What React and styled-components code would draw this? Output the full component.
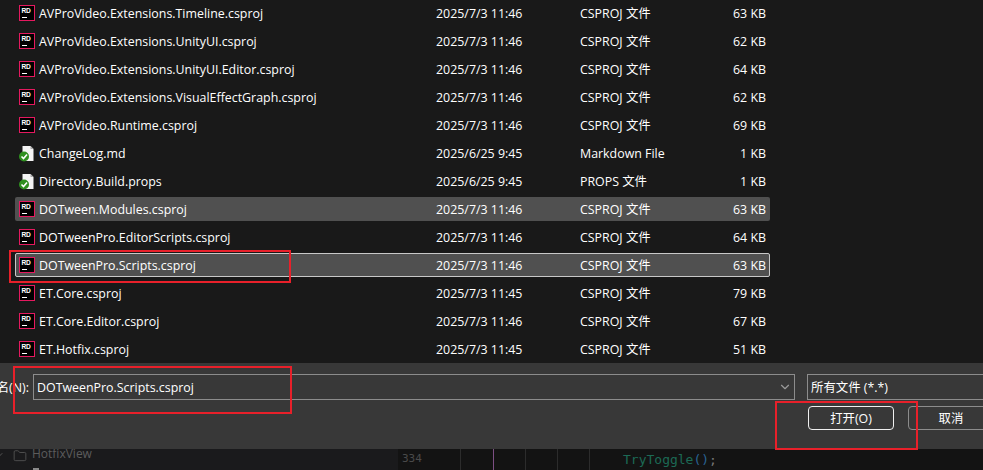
import React from 'react'
import styled, { createGlobalStyle } from 'styled-components'
import { ChevronDown, Folder } from 'lucide-react'

const GlobalStyle = createGlobalStyle`
  html, body {
    margin: 0;
    padding: 0;
    background: #191919;
  }
  body {
    font-family: "Open Sans", "Noto Sans CJK SC", sans-serif;
    font-size: 12.4px;
    color: #fff;
  }
`

const files = [
  { name: 'AVProVideo.Extensions.Timeline.csproj', date: '2025/7/3 11:46', type: 'CSPROJ 文件', size: '63 KB', icon: 'rd' },
  { name: 'AVProVideo.Extensions.UnityUI.csproj', date: '2025/7/3 11:46', type: 'CSPROJ 文件', size: '62 KB', icon: 'rd' },
  { name: 'AVProVideo.Extensions.UnityUI.Editor.csproj', date: '2025/7/3 11:46', type: 'CSPROJ 文件', size: '64 KB', icon: 'rd' },
  { name: 'AVProVideo.Extensions.VisualEffectGraph.csproj', date: '2025/7/3 11:46', type: 'CSPROJ 文件', size: '62 KB', icon: 'rd' },
  { name: 'AVProVideo.Runtime.csproj', date: '2025/7/3 11:46', type: 'CSPROJ 文件', size: '69 KB', icon: 'rd' },
  { name: 'ChangeLog.md', date: '2025/6/25 9:45', type: 'Markdown File', size: '1 KB', icon: 'doc' },
  { name: 'Directory.Build.props', date: '2025/6/25 9:45', type: 'PROPS 文件', size: '1 KB', icon: 'doc' },
  { name: 'DOTween.Modules.csproj', date: '2025/7/3 11:46', type: 'CSPROJ 文件', size: '63 KB', icon: 'rd', state: 'hover' },
  { name: 'DOTweenPro.EditorScripts.csproj', date: '2025/7/3 11:46', type: 'CSPROJ 文件', size: '64 KB', icon: 'rd' },
  { name: 'DOTweenPro.Scripts.csproj', date: '2025/7/3 11:46', type: 'CSPROJ 文件', size: '63 KB', icon: 'rd', state: 'selected' },
  { name: 'ET.Core.csproj', date: '2025/7/3 11:45', type: 'CSPROJ 文件', size: '79 KB', icon: 'rd' },
  { name: 'ET.Core.Editor.csproj', date: '2025/7/3 11:46', type: 'CSPROJ 文件', size: '67 KB', icon: 'rd' },
  { name: 'ET.Hotfix.csproj', date: '2025/7/3 11:45', type: 'CSPROJ 文件', size: '51 KB', icon: 'rd' },
]

const RiderIcon = () => (
  <svg width="16" height="16" viewBox="0 0 16 16">
    <rect x="0.5" y="0.5" width="15" height="15" fill="#000" stroke="#e5195f" />
    <text x="2.5" y="8" fontFamily="Liberation Sans" fontSize="6.6" fontWeight="700" letterSpacing="-0.3" fill="#fff">RD</text>
    <rect x="3" y="12" width="5" height="1" fill="#fff" />
  </svg>
)

const DocIcon = () => (
  <svg width="16" height="18" viewBox="0 0 16 18">
    <path d="M3.5 2h8l3 3v12h-11z" fill="#f4f4f4" />
    <path d="M11.5 2v3h3z" fill="#a8a8a8" />
    <circle cx="5" cy="12.5" r="5" fill="#2f8f1f" />
    <path d="M2.5 12.5l2 2 3.5-4" fill="none" stroke="#fff" strokeWidth="1.6" />
  </svg>
)

function App() {
  return (
    <Page>
      <GlobalStyle />
      <FileList>
        {files.map((file) => (
          <Row key={file.name} $state={file.state}>
            <IconCell>{file.icon === 'rd' ? <RiderIcon /> : <DocIcon />}</IconCell>
            <span>{file.name}</span>
            <span>{file.date}</span>
            <span>{file.type}</span>
            <Size>{file.size}</Size>
          </Row>
        ))}
      </FileList>

      <Footer>
        <FieldRow>
          <FieldLabel>名(N):</FieldLabel>
          <NameInput>
            <span>DOTweenPro.Scripts.csproj</span>
            <ChevronDown size={14} color="#9a9a9a" />
          </NameInput>
          <FilterSelect>所有文件 (*.*)</FilterSelect>
        </FieldRow>
        <ButtonRow>
          <DialogButton $primary>打开(O)</DialogButton>
          <DialogButton>取消</DialogButton>
        </ButtonRow>
      </Footer>

      <Editor>
        <SidePanel>
          <TreeRow>
            <TreeChevron size={12} color="#555" />
            <Folder size={14} color="#555" strokeWidth={1.5} />
            <span>HotfixView</span>
          </TreeRow>
          <NextRowIcon />
        </SidePanel>
        <CodePane>
          <LineNumber>334</LineNumber>
          <Guide $w={33} />
          <Guide $w={32} $purple />
          <Guide $w={32} />
          <Guide $w={32} />
          <Guide $w={34} />
          <Code>TryToggle<Paren>()</Paren><Semi>;</Semi></Code>
        </CodePane>
      </Editor>

      <Callout $x={9} $y={250} $w={282} $h={33} />
      <Callout $x={13} $y={366} $w={279} $h={48} />
      <Callout $x={775} $y={401} $w={143} $h={49} />
    </Page>
  )
}

const Page = styled.div`
  position: relative;
  width: 983px;
  height: 470px;
  overflow: hidden;
  background: #191919;
  display: flex;
  flex-direction: column;
`

const FileList = styled.div`
  height: 363px;
  padding: 1px 213px 0 15px;
  box-sizing: border-box;
  display: flex;
  flex-direction: column;
  gap: 4px;
`

const Row = styled.div`
  height: 24px;
  flex: none;
  box-sizing: border-box;
  padding: 0 3px;
  display: grid;
  grid-template-columns: 20px 397px 144px 1fr auto;
  align-items: center;
  white-space: nowrap;
  border-radius: 2px;
  background: ${(p) => (p.$state ? '#505050' : 'transparent')};
  border: 1px solid ${(p) => (p.$state === 'selected' ? '#c8c8c8' : 'transparent')};
`

const IconCell = styled.span`
  display: flex;
  align-items: center;
`

const Size = styled.span`
  text-align: right;
`

const Footer = styled.div`
  height: 86px;
  flex: none;
  box-sizing: border-box;
  background: #383838;
  padding-top: 11px;
  display: flex;
  flex-direction: column;
  gap: 6px;
`

const FieldRow = styled.div`
  display: flex;
  align-items: center;
  margin-left: -12px;
`

const FieldLabel = styled.span`
  width: 41px;
  flex: none;
  text-align: right;
  margin-right: 4px;
  white-space: nowrap;
`

const NameInput = styled.div`
  width: 762px;
  height: 26px;
  flex: none;
  box-sizing: border-box;
  border: 1px solid #8c8c8c;
  padding: 0 2px 0 3px;
  display: flex;
  align-items: center;
  justify-content: space-between;
`

const FilterSelect = styled.div`
  width: 200px;
  height: 26px;
  flex: none;
  box-sizing: border-box;
  margin-left: 12px;
  border: 1px solid #8c8c8c;
  padding: 0 3px;
  display: flex;
  align-items: center;
`

const ButtonRow = styled.div`
  display: flex;
  gap: 14px;
  padding-left: 808px;
`

const DialogButton = styled.div`
  width: 86px;
  height: 24px;
  flex: none;
  box-sizing: border-box;
  border: 1px solid ${(p) => (p.$primary ? '#f0f0f0' : '#8c8c8c')};
  border-radius: 4px;
  display: flex;
  align-items: center;
  justify-content: center;
`

const Editor = styled.div`
  flex: 1;
  min-height: 0;
  display: flex;
  background: #131313;
`

const SidePanel = styled.div`
  width: 398px;
  flex: none;
  box-sizing: border-box;
  background: #1a1a1c;
  display: flex;
  flex-direction: column;
  overflow: hidden;
`

const TreeRow = styled.div`
  height: 12px;
  flex: none;
  display: flex;
  align-items: flex-start;
  gap: 5px;
  color: #5c5c5c;
  font-size: 12px;
  line-height: 9px;
`

const TreeChevron = styled(ChevronDown)`
  margin-left: -7px;
  margin-right: 3px;
  flex: none;
`

const NextRowIcon = styled.div`
  width: 6px;
  height: 2px;
  flex: none;
  margin: 7px 0 0 33px;
  background: #8a8a8a;
`

const CodePane = styled.div`
  flex: 1;
  display: flex;
  font-family: "DejaVu Sans Mono", monospace;
  font-size: 13px;
  align-items: stretch;
`

const LineNumber = styled.div`
  width: 62px;
  flex: none;
  box-sizing: border-box;
  padding: 3px 0 0 4px;
  font-size: 11px;
  color: #4a4a4a;
`

const Guide = styled.div`
  width: ${(p) => p.$w}px;
  flex: none;
  box-sizing: border-box;
  border-left: 1px solid ${(p) => (p.$purple ? '#7d4f84' : '#2c2c2c')};
`

const Code = styled.div`
  padding: 3px 0 0 0;
  color: #1c6a55;
`

const Paren = styled.span`
  color: #2a6494;
`

const Semi = styled.span`
  color: #777;
`

const Callout = styled.div`
  position: absolute;
  left: ${(p) => p.$x}px;
  top: ${(p) => p.$y}px;
  width: ${(p) => p.$w}px;
  height: ${(p) => p.$h}px;
  box-sizing: border-box;
  border: 2px solid #e8202a;
  pointer-events: none;
`

export default App
